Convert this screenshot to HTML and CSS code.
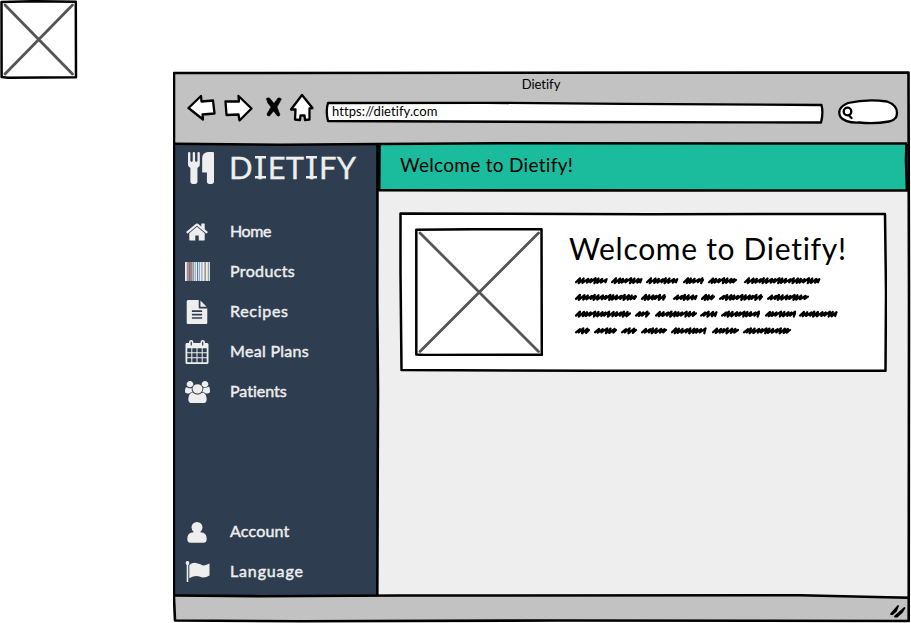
FILE: index.html
```
<!DOCTYPE html>
<html lang="en">
<head>
<meta charset="utf-8">
<title>Dietify</title>
<link rel="stylesheet" href="styles.css">
</head>
<body>
<div class="board">
  <svg class="thumb" viewBox="0 0 78 79">
    <path class="paper" d="M1.500 2L34 1.200 75.800 1.800 76 77.200 8 77.700 1.600 77Z"/>
    <path class="cross" d="M5 5L72.500 74M72.500 5L5 74"/>
  </svg>

  <div class="window">
    <header class="chrome">
      <div class="chrome-title">Dietify</div>
      <div class="toolbar">
        <svg class="tool back" viewBox="0 0 30 30"><path d="M1.500 14L14 2 14.500 7.500 26 6.500 27.500 19.500 15.500 20.500 16 25.500Z"/></svg>
        <svg class="tool forward" viewBox="0 0 30 30"><path d="M1.500 7.500L15 7.500 14.500 2 27.500 14.500 15.500 26.500 14.500 20.500 2.500 21Z"/></svg>
        <svg class="tool stop" viewBox="0 0 18 24"><path class="ink" d="M1.500 4Q2 2 4.500 3L9 8.500 13 3Q15 2.500 16.500 4L12 12 15 20Q14 22 12 20.500L8.500 16 4.500 21Q2 21.500 2 19L6 12Q2 8 1.500 4Z"/></svg>
        <svg class="tool up" viewBox="0 0 26 30"><path d="M13 2L23.500 15 20.500 15.500 20.500 26.500 16 27 15.500 22.500 11.500 22.500 11 27 6 26.500 6.500 16.500 2 16.500Z"/></svg>
        <div class="address">
          <svg class="outline" viewBox="0 0 500 24"><path d="M3 2L160 1.800 300 2.800 496.500 4Q498.500 12 496 21.500L250 21 3 20Q.5 10 3 2Z"/></svg>
          <span class="url">https://dietify.com</span>
        </div>
        <svg class="tool search" viewBox="0 0 62 27"><path d="M11 5Q30 .5 50 3.500 60 7 60 15 60 22 52 23.500 38 26 22 24.500 8 25 3.500 19-1 10 11 5Z"/><ellipse cx="10.500" cy="13.500" rx="3.800" ry="3.800"/><path d="M12 17.500L14.500 20"/></svg>
      </div>
    </header>

    <div class="workspace">
      <aside class="sidebar">
        <div class="brand">
          <svg class="brand-icon" viewBox="192 0 1408 1792" preserveAspectRatio="none"><path d="M832 64v640q0 61-35.500 111t-92.500 70v779q0 52-38 90t-90 38h-128q-52 0-90-38t-38-90v-779q-57-20-92.500-70t-35.500-111v-640q0-26 19-45t45-19 45 19 19 45v416q0 26 19 45t45 19 45-19 19-45v-416q0-26 19-45t45-19 45 19 19 45v416q0 26 19 45t45 19 45-19 19-45v-416q0-26 19-45t45-19 45 19 19 45zm768 0v1600q0 52-38 90t-90 38h-128q-52 0-90-38t-38-90v-512h-224q-13 0-22.500-9.500t-9.500-22.500v-800q0-132 94-226t226-94h256q26 0 45 19t19 45z"/></svg>
          <span class="brand-name">D<span class="slab">I</span>ET<span class="slab">I</span>FY</span>
        </div>
        <nav class="menu">
          <a class="item"><span class="icon"><svg width="24" height="24" viewBox="0 0 1792 1792"><path d="M1472 992v480q0 26-19 45t-45 19h-384v-384h-256v384h-384q-26 0-45-19t-19-45v-480q0-1 .5-3t.5-3l575-474 575 474q1 2 1 6zm223-69l-62 74q-8 9-21 11h-3q-13 0-21-7l-692-577-692 577q-12 8-24 7-13-2-21-11l-62-74q-8-10-7-23.500t11-21.500l719-599q32-26 76-26t76 26l244 204v-195q0-14 9-23t23-9h192q14 0 23 9t9 23v408l219 182q10 8 11 21.500t-7 23.500z"/></svg></span><span class="label l-home">Home</span></a>
          <a class="item"><span class="icon"><i class="barcode"></i></span><span class="label l-products">Products</span></a>
          <a class="item"><span class="icon"><svg width="24" height="24" viewBox="0 0 1792 1792"><path d="M1596 476q14 14 28 36h-472v-472q22 14 36 28zm-476 164h544v1056q0 40-28 68t-68 28h-1344q-40 0-68-28t-28-68v-1600q0-40 28-68t68-28h800v544q0 40 28 68t68 28zm160 736v-64q0-14-9-23t-23-9h-704q-14 0-23 9t-9 23v64q0 14 9 23t23 9h704q14 0 23-9t9-23zm0-256v-64q0-14-9-23t-23-9h-704q-14 0-23 9t-9 23v64q0 14 9 23t23 9h704q14 0 23-9t9-23zm0-256v-64q0-14-9-23t-23-9h-704q-14 0-23 9t-9 23v64q0 14 9 23t23 9h704q14 0 23-9t9-23z"/></svg></span><span class="label l-recipes">Recipes</span></a>
          <a class="item"><span class="icon"><svg width="24" height="24" viewBox="0 0 24 24"><path fill-rule="evenodd" d="M1.500 3H4V2.200Q4 0 6.200 0T8.400 2.200V3H15.500V2.200Q15.500 0 17.700 0T20 2.200V3H22Q23.500 3 23.500 4.500V22.500Q23.500 24 22 24H2Q.5 24 .5 22.500V4.500Q.5 3 1.500 3ZM2.300 8.300V12.300H6.300V8.300ZM7.300 8.300V12.300H11.500V8.300ZM12.500 8.300V12.300H16.700V8.300ZM17.700 8.300V12.300H21.700V8.300ZM2.300 13.300V17.300H6.300V13.300ZM7.300 13.300V17.300H11.500V13.300ZM12.500 13.300V17.300H16.700V13.300ZM17.700 13.300V17.300H21.700V13.300ZM2.300 18.300V22.300H6.300V18.300ZM7.300 18.300V22.300H11.500V18.300ZM12.500 18.300V22.300H16.700V18.300ZM17.700 18.300V22.300H21.700V18.300ZM5.700 1.700V5.500H6.900V1.700ZM17.100 1.700V5.500H18.300V1.700Z"/></svg></span><span class="label l-meals">Meal Plans</span></a>
          <a class="item"><span class="icon"><svg width="25" height="22" viewBox="64 0 1920 1792" preserveAspectRatio="none"><path d="M657 896q-162 5-265 128h-134q-82 0-138-40.500t-56-118.500q0-353 124-353 6 0 43.500 21t97.500 42.500 119 21.500q67 0 133-23-5 37-5 66 0 159 81 293zm1071 637q0 120-73 189.500t-194 69.500h-874q-121 0-194-69.500t-73-189.500q0-53 3.500-103.500t14-109 26.500-108.500 43-97.500 62-81 85.500-53.500 111.500-20q10 0 43 21.500t73 48 107 48 135 21.500 135-21.500 107-48 73-48 43-21.500q61 0 111.500 20t85.500 53.500 62 81 43 97.500 26.500 108.500 14 109 3.500 103.500zm-1024-1277q0 106-75 181t-181 75-181-75-75-181 75-181 181-75 181 75 75 181zm704 384q0 159-112.500 271.500t-271.500 112.500-271.500-112.500-112.500-271.500 112.500-271.500 271.500-112.500 271.500 112.500 112.500 271.500zm576 225q0 78-56 118.500t-138 40.500h-134q-103-128-265-128 81-134 81-293 0-29-5-66 66 23 133 23 59 0 119-21.500t97.500-42.500 43.500-21q124 0 124 353zm-128-609q0 106-75 181t-181 75-181-75-75-181 75-181 181-75 181 75 75 181z"/></svg></span><span class="label l-patients">Patients</span></a>
        </nav>
        <nav class="menu menu-bottom">
          <a class="item"><span class="icon"><svg width="20" height="21" viewBox="0 0 20 21"><path d="M10 0A5.500 5.500 0 0 1 15.500 5.500Q15.500 8.500 13 10.300 19.700 10 19.700 17 19.700 20.800 16.500 20.800H3.500Q.3 20.800 .3 17 .3 10 7 10.300 4.500 8.500 4.500 5.500A5.500 5.500 0 0 1 10 0Z"/></svg></span><span class="label l-account">Account</span></a>
          <a class="item"><span class="icon"><svg width="25" height="22" viewBox="0 0 25 22"><circle cx="2.500" cy="2" r="1.900"/><path d="M1.700 2H3.300V21H1.700ZM4.300 4Q8 1 12 2.200T17.500 4.300 24.500 2.500V14.500Q19 18 14.500 15.500 10 14 4.300 17.300Z"/></svg></span><span class="label l-language">Language</span></a>
        </nav>
      </aside>

      <main class="main">
        <div class="banner"><span>Welcome to Dietify!</span></div>
        <section class="card">
          <svg class="outline" viewBox="0 0 488 160"><path class="paper" d="M1.500 1.500L110 1.800 250 2.200 486 2 487 80 486.500 158.800 200 158.800 2.500 158 1.500 60Z"/></svg>
          <svg class="picture" viewBox="0 0 128 128"><path class="paper" d="M1.300 1.800L60 1.200 126.500 1.200 126.800 126.800 10 127 1.300 126.500Z"/><path class="cross" d="M5 5L123.500 123.500M123.500 5L5 123.500"/></svg>
          <div class="copy">
            <h1>Welcome to Dietify!</h1>
            <svg class="scribble" viewBox="0 0 270 68"></svg>
          </div>
        </section>
      </main>
    </div>

    <footer class="statusbar">
      <svg class="grip" viewBox="0 0 18 15"><path d="M2 11L9 3 7 8 3.500 11ZM6 13.500L15.500 5 13 9 8 13.500Z"/></svg>
    </footer>

    <svg class="outline frame" viewBox="173 71 738 552">
      <path d="M174 73L908.500 72.500 909 300 908.700 621 560 620.500 300 621.300 175 620.500 173.900 596 173.900 300Z"/>
      <path d="M174 143.800L280 144.700 378 144 500 143.300 907 143.500"/>
      <path d="M377.500 145L377.300 300 378 390 377.300 596"/>
      <path d="M379.500 144L379.200 190.200 560 190.400 907 190.500 906 160 906.500 144"/>
      <path d="M174 595.500L260 596.200 400 595.500 800 595.300 908 597.800"/>
    </svg>
  </div>
</div>
<script src="scribble.js"></script>
</body>
</html>
```
FILE: styles.css
```
* { box-sizing: border-box; }
body {
  margin: 0;
  background: #fff;
  color: #000;
  font-family: Lato, "Liberation Sans", sans-serif;
  font-variant-ligatures: none;
}
svg { display: block; }
.board {
  display: grid;
  grid-template-columns: 173px 738px;
  grid-template-rows: 71px 552px;
  width: 911px;
  height: 623px;
  overflow: hidden;
}
.thumb { grid-row: 1 / 3; width: 78px; height: 79px; }
.paper { fill: #fff; stroke: #000; stroke-width: 2.5; stroke-linejoin: round; }
.cross { fill: none; stroke: #555; stroke-width: 2.8; stroke-linecap: round; }
.outline { position: absolute; inset: 0; width: 100%; height: 100%; }

.window {
  position: relative;
  grid-column: 2;
  grid-row: 2;
  display: grid;
  grid-template-rows: 73px 452px 25px;
}
.frame { fill: none; stroke: #000; stroke-width: 2.6; stroke-linejoin: round; pointer-events: none; }
.chrome { background: #c2c2c2; margin: 1px 2px 0 1px; }
.chrome-title {
  height: 22px;
  line-height: 25px;
  padding-right: 1px;
  text-align: center;
  font-size: 13px;
  letter-spacing: 0;
}
.toolbar { display: flex; align-items: flex-start; padding-left: 13px; }
.tool, .address .outline { fill: #fff; stroke: #000; stroke-width: 2.3; stroke-linejoin: round; stroke-linecap: round; }
.tool .ink { fill: #000; stroke-width: .6; }
.back, .forward { width: 30px; height: 30px; }
.forward { margin-left: 7px; }
.stop { width: 18px; height: 24px; margin: 1px 0 0 11px; }
.up { width: 26px; height: 30px; margin: -1px 0 0 6px; }
.address { position: relative; width: 500px; height: 24px; margin: 7px 0 0 10px; padding-left: 7px; }
.url { position: relative; font-size: 13px; line-height: 21px; letter-spacing: .08px; display: block; }
.search { width: 62px; height: 27px; margin: 4px 0 0 12px; }

.workspace { display: grid; grid-template-columns: 205px 531px; padding-left: 0; }
.sidebar {
  display: flex;
  flex-direction: column;
  background: #2e3e50;
  margin-left: 1px;
  padding: 8px 0 4px 11px;
  color: #eee;
  fill: #eee;
}
.brand { display: flex; height: 60px; padding-left: 3px; }
.brand-icon { width: 26px; height: 32px; }
.brand-name {
  margin-left: 15px;
  font-size: 31px;
  line-height: 30px;
  letter-spacing: .1px;
  white-space: nowrap;
  -webkit-text-stroke: .3px #eee;
}
.slab {
  display: inline-block;
  width: 15px;
  text-align: center;
  letter-spacing: 0;
  background:
    linear-gradient(#eee, #eee) center 4px / 11px 2.500px no-repeat,
    linear-gradient(#eee, #eee) center 24px / 11px 2.500px no-repeat;
}
.menu-bottom { margin-top: auto; }
.item { display: flex; align-items: center; height: 40px; font-size: 16px; -webkit-text-stroke: .45px #eee; }
.label { padding-bottom: 4px; }
.l-home { letter-spacing: -.4px; }
.l-products { letter-spacing: .35px; }
.l-recipes { letter-spacing: .7px; }
.l-meals { letter-spacing: .3px; }
.l-patients { letter-spacing: 0; }
.l-account { letter-spacing: .2px; }
.l-language { letter-spacing: .85px; }
.icon { display: flex; justify-content: center; width: 24px; margin-right: 21px; }
.icon svg { flex: none; }
.barcode {
  width: 25px;
  height: 19px;
  flex: none;
  margin-bottom: 1px;
  background: linear-gradient(90deg, #eee 0 1px, #cfd9df 1px 2px, #ad8679 2px 3px, #74a0c4 3px 4px, #c25c4c 4px 5px, #6d93b5 5px 6px, #c96f5b 6px 7px, #9fb6c6 7px 8px, #b98c70 8px 9px, #d5dde2 9px 10px, #8db7da 10px 11px, #eee 11px 12px, #4e7fae 12px 13px, #e9d9c6 13px 14px, #7fb0da 14px 15px, #eee 15px 16px, #9fb9e0 16px 17px, #c3cad8 17px 18px, #eee 18px 19px, #e0b08c 19px 20px, #7d9dba 20px 21px, #eee 21px 22px, #dcdcc8 22px 23px, #8aa5b5 23px 24px, #e6e0cc 24px 25px);
}

.main { background: #eee; }
.banner {
  display: flex;
  align-items: center;
  height: 46px;
  padding: 0 0 5px 22px;
  background: #1bbc9d;
  font-size: 19px;
  letter-spacing: .3px;
}
.card { position: relative; display: flex; width: 488px; height: 160px; margin: 22px 0 0 21px; padding: 16px; }
.picture { position: relative; width: 128px; height: 128px; }
.copy { position: relative; margin-left: 26px; }
h1 { margin: 0; font-size: 30px; font-weight: 400; line-height: 40px; letter-spacing: .7px; white-space: nowrap; }
.scribble { width: 270px; height: 68px; margin: 4px 0 0 4px; fill: none; stroke: #000; stroke-width: 2.2; stroke-linecap: round; stroke-linejoin: round; }

.statusbar { display: flex; justify-content: flex-end; align-items: center; background: #c2c2c2; margin: 0 2px 0 2px; }
.grip { width: 18px; height: 15px; margin: 3px 2px 0 0; stroke: #000; stroke-width: 1.8; stroke-linejoin: round; }
```
FILE: scribble.js
```
// Placeholder copy: every pair is the start and end of one scribbled word.
const lines = [
  [[2, 34], [38, 69], [73, 105], [110, 131], [135, 164], [171, 247]],
  [[2, 64], [68, 93], [100, 124], [128, 142], [146, 190], [194, 236]],
  [[2, 58], [62, 77], [82, 124], [127, 144], [148, 187], [192, 223], [226, 264]],
  [[2, 17], [21, 44], [48, 64], [68, 94], [98, 133], [139, 166], [170, 218]]
];
const svg = document.querySelector(".scribble");
let step = 0;
lines.forEach((words, row) => {
  const y = 8.7 + row * 16.7;
  words.forEach(([from, to]) => {
    let d = `M${from + 1} ${y + 1.5}`;
    for (let x = from + 1; x < to - 4; x += 2.9 + (step * 7 % 5) * 0.4) {
      step += 1;
      const rise = 1.6 + (step * 3 % 4) * 0.3;
      d += `L${(x + 4).toFixed(1)} ${(y - rise).toFixed(1)}L${(x + 2.7).toFixed(1)} ${(y + rise).toFixed(1)}`;
    }
    d += `L${to - 1} ${y - 0.8}`;
    const path = document.createElementNS("http://www.w3.org/2000/svg", "path");
    path.setAttribute("d", d);
    svg.append(path);
  });
});
```
